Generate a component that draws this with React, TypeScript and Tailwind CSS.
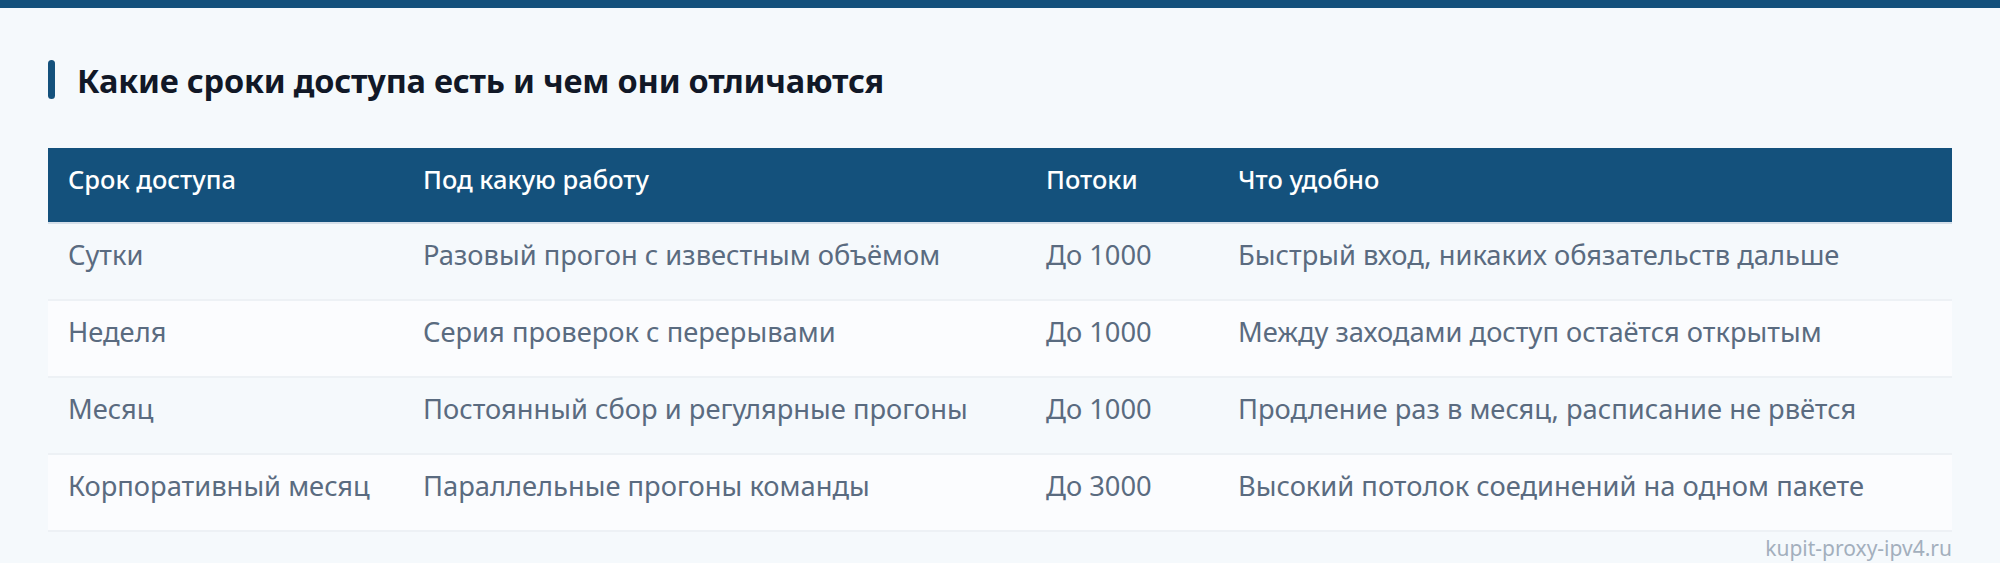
const rows = [
  ["Сутки", "Разовый прогон с известным объёмом", "До 1000", "Быстрый вход, никаких обязательств дальше"],
  ["Неделя", "Серия проверок с перерывами", "До 1000", "Между заходами доступ остаётся открытым"],
  ["Месяц", "Постоянный сбор и регулярные прогоны", "До 1000", "Продление раз в месяц, расписание не рвётся"],
  ["Корпоративный месяц", "Параллельные прогоны команды", "До 3000", "Высокий потолок соединений на одном пакете"],
];

const headers = ["Срок доступа", "Под какую работу", "Потоки", "Что удобно"];

const grid = "grid grid-cols-[355px_623px_192px_1fr]";

export default function App() {
  return (
    <div
      className="min-h-[563px] bg-[#f5f9fc] border-t-8 border-[#14517c]"
      style={{ fontFamily: '"Noto Sans", "Open Sans", sans-serif' }}
    >
      <div className="px-12 pt-[52px]">
        <div className="flex items-center gap-[22px] h-[39px]">
          <span className="w-[7px] h-[39px] rounded-full bg-[#14517c]" />
          <h2 className="text-[32.5px] font-bold text-[#111827] tracking-[-0.2px] leading-none pt-[3px]">
            Какие сроки доступа есть и чем они отличаются
          </h2>
        </div>

        <div className="mt-[49px]">
          <div className={`${grid} h-[76px] items-center bg-[#14517c] border-b-2 border-[#d5dfe9] text-white text-[25.5px] font-medium`}>
            {headers.map(h => (
              <div key={h} className="px-5 pb-[12px]">{h}</div>
            ))}
          </div>
          {rows.map((r, i) => (
            <div
              key={r[0]}
              className={`${grid} h-[77px] items-center border-b-2 border-[#edf1f5] text-[27.3px] text-[#5a6b80] ${i % 2 === 0 ? "bg-[#f5f9fc]" : "bg-[#fbfcfe]"}`}
            >
              {r.map((c, j) => (
                <div key={j} className="px-5 pb-[13px] whitespace-nowrap">{c}</div>
              ))}
            </div>
          ))}
        </div>

        <div className="flex justify-end pt-1 text-[21px] text-[#a3afbd] leading-6">
          kupit-proxy-ipv4.ru
        </div>
      </div>
    </div>
  );
}
